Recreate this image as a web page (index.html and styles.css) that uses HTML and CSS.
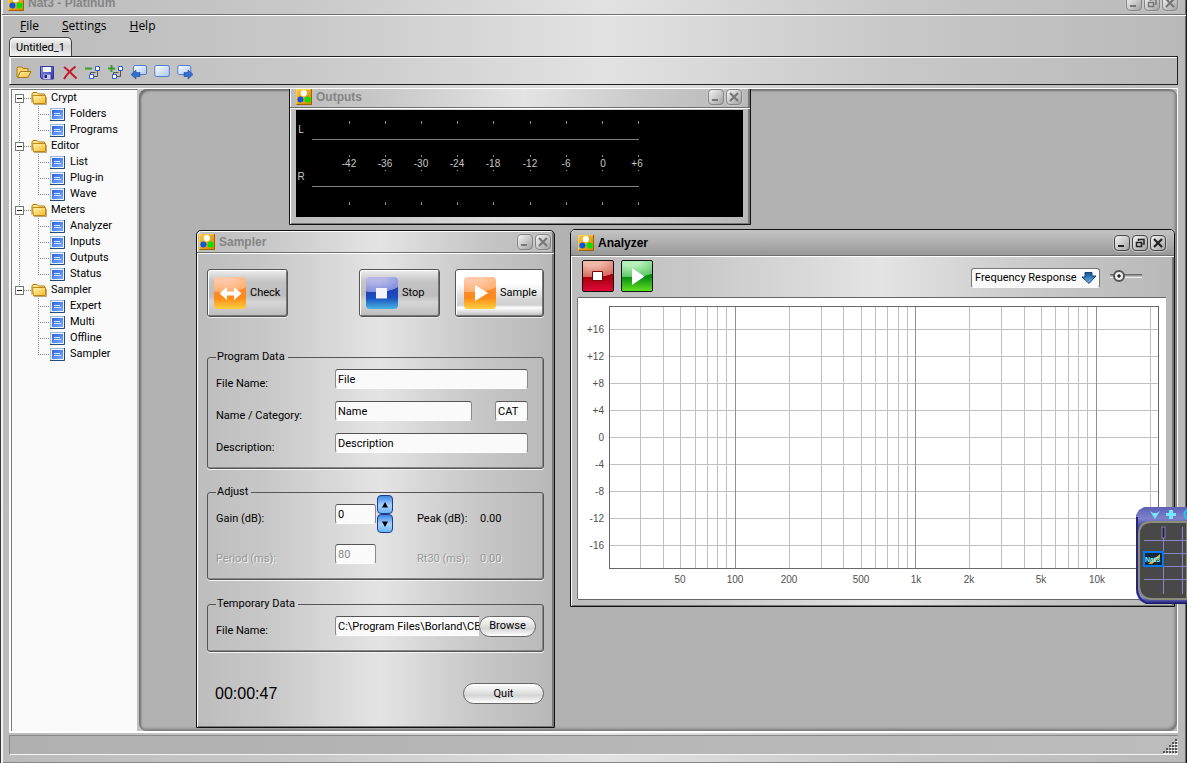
FILE: index.html
```html
<!DOCTYPE html>
<html lang="en">
<head>
<meta charset="utf-8">
<title>Nat3 - Platinum</title>
<link rel="stylesheet" href="styles.css">
</head>
<body>
<svg width="0" height="0" class="defs" aria-hidden="true">
  <defs>
    <linearGradient id="gGold" x1="0" y1="0" x2="1" y2="1"><stop offset="0" stop-color="#ffc93a"/><stop offset="1" stop-color="#c98500"/></linearGradient>
    <linearGradient id="gFolder" x1="0" y1="0" x2="1" y2="1"><stop offset="0" stop-color="#fff7b0"/><stop offset="1" stop-color="#f5b92c"/></linearGradient>
    <linearGradient id="gBlue" x1="0" y1="0" x2="1" y2="1"><stop offset="0" stop-color="#2d62d8"/><stop offset="1" stop-color="#7fb0ff"/></linearGradient>
    <linearGradient id="gPale" x1="0" y1="0" x2="1" y2="1"><stop offset="0" stop-color="#ffffff"/><stop offset="1" stop-color="#a9c6f5"/></linearGradient>
    <linearGradient id="gDisk" x1="0" y1="0" x2="1" y2="1"><stop offset="0" stop-color="#8c93f0"/><stop offset="1" stop-color="#2c2f9c"/></linearGradient>
    <linearGradient id="gArrow" x1="0" y1="0" x2="0" y2="1"><stop offset="0" stop-color="#174a8c"/><stop offset="1" stop-color="#6db8ee"/></linearGradient>
    <linearGradient id="gPager" x1="0" y1="0" x2="0" y2="1"><stop offset="0" stop-color="#5d60b4"/><stop offset=".12" stop-color="#7e82cc"/><stop offset=".2" stop-color="#4a4c9a"/><stop offset=".7" stop-color="#8a8cc4"/><stop offset=".93" stop-color="#8488e8"/><stop offset="1" stop-color="#101060"/></linearGradient>
    <symbol id="logo" viewBox="0 0 16 16"><rect width="16" height="16" fill="url(#gGold)"/><path d="M0 16V0H16" fill="none" stroke="#ffdc78"/><path d="M.5 15.5H15.5V0" fill="none" stroke="#9a6500"/><circle cx="7.8" cy="4.2" r="3.1" fill="#fff"/><circle cx="4.4" cy="10.6" r="3" fill="#0a55e8"/><circle cx="11.6" cy="10.6" r="3" fill="#08e008"/></symbol>
    <symbol id="folder" viewBox="0 0 16 14"><path d="M1 11.5V3L2 1.5H6L7.5 3H13.5V5" fill="#ffe98c" stroke="#b27a10"/><path d="M1.500 4.500H14.500V12.500H2.500Z" fill="url(#gFolder)" stroke="#c08a18"/><path d="M3 13.500H15.500V6" fill="none" stroke="#8b6a20" stroke-opacity=".6"/></symbol>
    <symbol id="form" viewBox="0 0 15 13"><rect x=".5" y=".5" width="14" height="12" fill="#e8f1ff" stroke="#9dbbe0"/><rect x="2" y="2" width="11" height="9" fill="url(#gBlue)"/><path d="M0 12.500H14.500V0" fill="none" stroke="#274a7c"/><path d="M4 5.500H10M4 7.500H11" stroke="#cfe4ff"/></symbol>
    <symbol id="min" viewBox="0 0 14 14"><path d="M3 10H9" stroke="currentColor" stroke-width="2"/></symbol>
    <symbol id="restore" viewBox="0 0 14 14"><path d="M5.500 5V3.500H11V8H9.500" fill="none" stroke="currentColor" stroke-width="1.500"/><path d="M3.500 6.500H8.500V10.500H3.500Z" fill="none" stroke="currentColor" stroke-width="1.500"/></symbol>
    <symbol id="close" viewBox="0 0 14 14"><path d="M3 3L11 11M11 3L3 11" stroke="currentColor" stroke-width="2.200"/></symbol>
    <symbol id="nodes" viewBox="0 0 12 15"><path d="M2.500 9V7.500H7.500" fill="none" stroke="#555"/><path d="M7.500 1.500H11.500V5.500H7.500ZM1.500 9.500H5.500V13.500H1.500Z" fill="#fff" stroke="#2f5fc0"/><path d="M6 11.500H9.500V6" fill="none" stroke="#555"/></symbol>
  </defs>
</svg>
<div class="app">
  <header class="title app-title">
    <svg class="logo"><use href="#logo"/></svg>
    <h1 class="caption">Nat3 - Platinum</h1>
    <button class="wbtn" aria-label="Minimize"><svg><use href="#min"/></svg></button>
    <button class="wbtn" aria-label="Restore"><svg><use href="#restore"/></svg></button>
    <button class="wbtn" aria-label="Close"><svg><use href="#close"/></svg></button>
  </header>
  <nav class="menu">
    <button><u>F</u>ile</button><button><u>S</u>ettings</button><button><u>H</u>elp</button>
  </nav>
  <div class="tabs"><button class="tab">Untitled_1</button></div>
  <div class="toolbar">
    <button aria-label="Open"><svg viewBox="0 0 16 16"><path d="M1 13V4L2 3H6L7 4.500H12V7" fill="#f8d568" stroke="#a87818"/><path d="M1.500 13.500L4.500 7.500H15L12 13.500Z" fill="url(#gFolder)" stroke="#a87818"/></svg></button>
    <button aria-label="Save"><svg viewBox="0 0 16 16"><path d="M1.500 2.500H14.500V15H3L1.500 13.500Z" fill="url(#gDisk)" stroke="#34369c"/><path d="M4 3H12V8H4Z" fill="#f4f6ff"/><path d="M4.500 10.500H11.500V15H4.500Z" fill="#c9cdf0"/><path d="M5.500 11H8V14H5.500Z" fill="#20206c"/></svg></button>
    <button aria-label="Delete"><svg viewBox="0 0 16 16"><path d="M2 3C6 6 10 10 14.500 14.500M13.500 2.500C9 6 5 10 2 15" fill="none" stroke="#c81428" stroke-width="2"/></svg></button>
    <button aria-label="Remove node"><svg viewBox="0 0 16 16"><path d="M0 4.500H7" stroke="#3a9a30" stroke-width="2"/><use href="#nodes" x="3" y="1" width="12" height="15"/></svg></button>
    <button aria-label="Add node"><svg viewBox="0 0 16 16"><path d="M0 4.500H7M3.500 1V8" stroke="#3a9a30" stroke-width="2"/><use href="#nodes" x="3" y="1" width="12" height="15"/></svg></button>
    <button aria-label="Previous"><svg viewBox="0 0 16 16"><rect x="2.500" y="1.500" width="13" height="9" rx="1.500" fill="url(#gPale)" stroke="#4f7ed0"/><path d="M0 10.500L5 6V8.500H9V12.500H5V15Z" fill="#3470d0" stroke="#1e4ca0" stroke-width=".6"/></svg></button>
    <button aria-label="Window"><svg viewBox="0 0 16 16"><rect x=".8" y="1.500" width="14.500" height="11" rx="1.500" fill="url(#gPale)" stroke="#4f7ed0"/></svg></button>
    <button aria-label="Next"><svg viewBox="0 0 16 16"><rect x=".8" y="1.500" width="13" height="9" rx="1.500" fill="url(#gPale)" stroke="#4f7ed0"/><path d="M16 10.500L11 6V8.500H7V12.500H11V15Z" fill="#3470d0" stroke="#1e4ca0" stroke-width=".6"/></svg></button>
  </div>
  <main class="work">
    <aside class="side">
      <ul class="tree">
        <li class="branch"><div class="node"><button class="toggle" aria-label="Collapse Crypt"></button><svg class="folder"><use href="#folder"/></svg>Crypt</div>
          <ul><li><a href="#folders"><svg><use href="#form"/></svg>Folders</a></li><li><a href="#programs"><svg><use href="#form"/></svg>Programs</a></li></ul></li>
        <li class="branch"><div class="node"><button class="toggle" aria-label="Collapse Editor"></button><svg class="folder"><use href="#folder"/></svg>Editor</div>
          <ul><li><a href="#list"><svg><use href="#form"/></svg>List</a></li><li><a href="#plugin"><svg><use href="#form"/></svg>Plug-in</a></li><li><a href="#wave"><svg><use href="#form"/></svg>Wave</a></li></ul></li>
        <li class="branch"><div class="node"><button class="toggle" aria-label="Collapse Meters"></button><svg class="folder"><use href="#folder"/></svg>Meters</div>
          <ul><li><a href="#analyzer"><svg><use href="#form"/></svg>Analyzer</a></li><li><a href="#inputs"><svg><use href="#form"/></svg>Inputs</a></li><li><a href="#outputs"><svg><use href="#form"/></svg>Outputs</a></li><li><a href="#status"><svg><use href="#form"/></svg>Status</a></li></ul></li>
        <li class="branch"><div class="node"><button class="toggle" aria-label="Collapse Sampler"></button><svg class="folder"><use href="#folder"/></svg>Sampler</div>
          <ul><li><a href="#expert"><svg><use href="#form"/></svg>Expert</a></li><li><a href="#multi"><svg><use href="#form"/></svg>Multi</a></li><li><a href="#offline"><svg><use href="#form"/></svg>Offline</a></li><li><a href="#sampler"><svg><use href="#form"/></svg>Sampler</a></li></ul></li>
      </ul>
    </aside>
    <section class="mdi">
      <article class="win outputs" id="outputs">
        <header class="title"><svg class="logo"><use href="#logo"/></svg><h2 class="caption">Outputs</h2>
          <button class="wbtn" aria-label="Minimize"><svg><use href="#min"/></svg></button><button class="wbtn" aria-label="Close"><svg><use href="#close"/></svg></button></header>
        <svg class="meter" viewBox="0 0 447 107" role="img" aria-label="Output level meter">
          <path d="M16 29.500H343M16 76.500H343" stroke="#808080"/>
          <path d="M53.500 11v3m0 31v2m0 13v1m0 31v3M89.500 11v3m0 31v2m0 13v1m0 31v3M125.500 11v3m0 31v2m0 13v1m0 31v3M161.500 11v3m0 31v2m0 13v1m0 31v3M197.500 11v3m0 31v2m0 13v1m0 31v3M234.500 11v3m0 31v2m0 13v1m0 31v3M270.500 11v3m0 31v2m0 13v1m0 31v3M306.500 11v3m0 31v2m0 13v1m0 31v3M342.500 11v3m0 31v2m0 13v1m0 31v3" stroke="#909090" fill="none"/>
          <text x="5" y="23" text-anchor="middle">L</text><text x="5" y="70" text-anchor="middle">R</text>
          <g text-anchor="middle"><text x="53" y="57">-42</text><text x="89" y="57">-36</text><text x="125" y="57">-30</text><text x="161" y="57">-24</text><text x="197" y="57">-18</text><text x="234" y="57">-12</text><text x="270" y="57">-6</text><text x="307" y="57">0</text><text x="341" y="57">+6</text></g>
        </svg>
      </article>

      <article class="win sampler" id="sampler">
        <header class="title"><svg class="logo"><use href="#logo"/></svg><h2 class="caption">Sampler</h2>
          <button class="wbtn" aria-label="Minimize"><svg><use href="#min"/></svg></button><button class="wbtn" aria-label="Close"><svg><use href="#close"/></svg></button></header>
        <form class="body">
          <div class="actions">
            <button type="button" class="big"><span class="tile orange"><svg viewBox="0 0 32 32"><path d="M5.500 16.500L13 10V14.500H20V10L27.500 16.500L20 23V18.500H13V23Z" fill="#fff"/></svg></span>Check</button>
            <button type="button" class="big stop"><span class="tile blue"><svg viewBox="0 0 32 32"><path d="M10 11H21V21.500H10Z" fill="#f4f4ff"/></svg></span>Stop</button>
            <button type="button" class="big bright"><span class="tile orange"><svg viewBox="0 0 32 32"><path d="M11 8V24L24 16Z" fill="#fff"/></svg></span>Sample</button>
          </div>
          <fieldset><legend>Program Data</legend>
            <div class="row"><label for="file">File Name:</label><input id="file" class="wide" value="File"></div>
            <div class="row"><label for="name">Name / Category:</label><input id="name" class="grow" value="Name"><input class="cat" aria-label="Category" value="CAT"></div>
            <div class="row"><label for="desc">Description:</label><input id="desc" class="wide" value="Description"></div>
          </fieldset>
          <fieldset class="adjust"><legend>Adjust</legend>
            <div class="row spinrow"><label for="gain">Gain (dB):</label><input id="gain" class="num" value="0"><span class="spin"><button type="button" aria-label="Increase gain"><svg viewBox="0 0 6 6"><path d="M0 5.500L3 0L6 5.500Z"/></svg></button><button type="button" aria-label="Decrease gain"><svg viewBox="0 0 6 6"><path d="M0 .5L3 6L6 .5Z"/></svg></button></span><span class="read">Peak (dB):</span><output>0.00</output></div>
            <div class="row off"><label for="period">Period (ms):</label><input id="period" class="num" value="80" disabled><span class="spin"></span><span class="read">Rt30 (ms):</span><output>0.00</output></div>
          </fieldset>
          <fieldset class="temp"><legend>Temporary Data</legend>
            <div class="row"><label for="tmp">File Name:</label><input id="tmp" class="path" value="C:\Program Files\Borland\CB"><button type="button" class="pill browse">Browse</button></div>
          </fieldset>
          <div class="foot"><time>00:00:47</time><button type="button" class="pill quit">Quit</button></div>
        </form>
      </article>

      <article class="win analyzer" id="analyzer">
        <header class="title"><svg class="logo"><use href="#logo"/></svg><h2 class="caption">Analyzer</h2>
          <button class="wbtn" aria-label="Minimize"><svg><use href="#min"/></svg></button><button class="wbtn" aria-label="Restore"><svg><use href="#restore"/></svg></button><button class="wbtn" aria-label="Close"><svg><use href="#close"/></svg></button></header>
        <div class="abar">
          <button class="sq red" aria-label="Stop"><svg viewBox="1 1 30 30"><path d="M10.500 11.500H20.500V20.500H10.500Z" fill="#fff" stroke="#7c0008"/></svg></button>
          <button class="sq green" aria-label="Play"><svg viewBox="1 1 30 30"><path d="M11 8V25L23.500 16.500Z" fill="#fff"/></svg></button>
          <div class="combo"><select aria-label="Display mode"><option>Frequency Response</option></select><svg viewBox="0 0 16 12"><path d="M4 .5H11V4H15L8 11.500L1 5H4Z" fill="url(#gArrow)" stroke="#16427c"/></svg></div>
          <input type="range" class="range" aria-label="Zoom" value="12">
        </div>
        <svg class="chart" viewBox="0 0 588 301" role="img" aria-label="Frequency response chart">
          <path d="M31 31.500H581M31 58.500H581M31 85.500H581M31 112.500H581M31 139.500H581M31 166.500H581M31 193.500H581M31 220.500H581M31 247.500H581M62.500 9V271M85.500 9V271M102.500 9V271M117.500 9V271M129.500 9V271M139.500 9V271M148.500 9V271M211.500 9V271M243.500 9V271M265.500 9V271M283.500 9V271M297.500 9V271M309.500 9V271M320.500 9V271M329.500 9V271M391.500 9V271M423.500 9V271M446.500 9V271M463.500 9V271M477.500 9V271M490.500 9V271M500.500 9V271M509.500 9V271M572.500 9V271" stroke="#c0c0c0" fill="none"/>
          <path d="M157.500 9V271M337.500 9V271M518.500 9V271" stroke="#909090"/>
          <rect x="31.500" y="8.500" width="549" height="262" fill="none" stroke="#686868"/>
          <g text-anchor="end"><text x="26" y="35">+16</text><text x="26" y="62">+12</text><text x="26" y="89">+8</text><text x="26" y="116">+4</text><text x="26" y="143">0</text><text x="26" y="170">-4</text><text x="26" y="197">-8</text><text x="26" y="224">-12</text><text x="26" y="251">-16</text></g>
          <g text-anchor="middle"><text x="102" y="285">50</text><text x="157" y="285">100</text><text x="211" y="285">200</text><text x="283" y="285">500</text><text x="338" y="285">1k</text><text x="391" y="285">2k</text><text x="463" y="285">5k</text><text x="519" y="285">10k</text></g>
        </svg>
      </article>
    </section>
  </main>
  <footer class="status"><svg viewBox="0 0 16 16"><path d="M13 1h2M10 4h2m1 0h2M7 7h2m1 0h2m1 0h2M4 10h2m1 0h2m1 0h2m1 0h2M1 13h2m1 0h2m1 0h2m1 0h2m1 0h2" stroke="#555" stroke-width="2"/><path d="M14 2.500h2M11 5.500h2m1 0h2M8 8.500h2m1 0h2m1 0h2M5 11.500h2m1 0h2m1 0h2m1 0h2M2 14.500h2m1 0h2m1 0h2m1 0h2m1 0h2" stroke="#fff"/></svg></footer>
</div>
<svg class="pager" viewBox="0 0 51 97" role="img" aria-label="Desktop pager">
  <path d="M8 0H51V97H10L3 93L0 86V8L3 3Z" fill="url(#gPager)"/>
  <path d="M51 15H14Q3 16 3 27V80Q4 91 15 92H51Z" fill="#484848" stroke="#8c8c78" stroke-width="2"/>
  <path d="M1 10V82Q2 92 9 95" fill="none" stroke="#25257a" stroke-width="2"/>
  <path d="M8 33.500H51M8 46.500H51M8 59.500H51M8 72.500H51M27.500 20V87M46.500 20V87" stroke="#8585c5"/>
  <path d="M14 4L17 6H21L24 4L19 12ZM30 6H33V3H37V6H40V9H37V12H33V9H30Z" fill="#74e8ff"/>
  <path d="M51 3Q46 7 51 12" fill="none" stroke="#20c8f0" stroke-width="2"/>
  <rect x="26" y="20" width="3" height="11" fill="#202040" stroke="#8080b0"/>
  <rect x="8" y="45" width="19" height="14" fill="#102840" stroke="#0878f0" stroke-width="2"/>
  <path d="M12 57L24 47V50L16 57Z" fill="#e8b030"/>
  <text x="9" y="55">Nat3</text>
</svg>
</body>
</html>
```
FILE: styles.css
```css
* { box-sizing: border-box; }
body {
  margin: 0;
  font: 11px/12px Roboto, "Liberation Sans", sans-serif;
  color: #000;
}
button, input, select, output { font: inherit; color: inherit; }
button { padding: 0; border: 0; background: none; }
h1, h2 { margin: 0; }
.defs { position: absolute; }

.app {
  display: flex;
  flex-direction: column;
  min-height: 100vh;
  overflow: hidden;
  padding: 0 8px 8px 9px;
  border: solid #1c1c1c;
  border-width: 0 1px 1px 0;
  box-shadow: inset 1px 0 #333, inset 3px 0 #f2f2f2, inset -1px 0 #666, inset 0 -1px #888;
  background: linear-gradient(90deg, #bbb, #c8c8c8 25%, #e2e2e2 51%, #c8c8c8 75%, #b9b9b9);
}

/* Title bars and window buttons */
.title {
  display: flex;
  align-items: center;
  gap: 2px;
  height: 23px;
  padding: 0 8px 0 2px;
  border-bottom: 1px solid #707070;
  box-shadow: 0 1px #fff;
}
.logo { flex: none; width: 16px; height: 16px; }
.caption {
  flex: 1;
  padding-left: 2px;
  font: bold 12px/16px "Liberation Sans", sans-serif;
  color: #858585;
}
.wbtn {
  width: 16px;
  height: 16px;
  border: 1px solid #858585;
  border-radius: 4px;
  color: #777;
  background: linear-gradient(135deg, #f4f4f4, #a2a2a2);
  box-shadow: 0 0 0 1px #c9c9c9;
}
.wbtn svg { display: block; width: 14px; height: 14px; }
.app-title {
  margin: -8px -8px 0 -7px;
  padding: 0 8px 0 6px;
}

/* Menu, tabs, toolbar */
.menu {
  display: flex;
  gap: 23px;
  height: 22px;
  padding: 0 11px;
  font: 12px/22px "Open Sans", sans-serif;
}
.tabs { display: flex; height: 19px; }
.tab {
  height: 20px;
  margin-bottom: -1px;
  padding: 0 6px;
  border: 1px solid #444;
  border-bottom: 0;
  border-radius: 5px 5px 0 0;
  background: linear-gradient(#f6f6f6, #d4d4d4 45%, #f6f6f6);
  box-shadow: inset 1px 1px #fff;
}
.toolbar {
  display: flex;
  align-items: center;
  gap: 7px;
  height: 29px;
  padding: 2px 6px 0;
  border: 1px solid #222;
  border-left-color: #eee;
  box-shadow: inset 0 1px #fff, inset 1px 0 #fff;
}
.toolbar button, .toolbar svg { display: block; width: 16px; height: 16px; }

/* Workspace */
.work {
  display: flex;
  flex: 1;
  margin-top: 3px;
  min-height: 645px;
  border: 1px solid #fff;
  border-width: 1px 1px 2px 2px;
}
.side {
  flex: none;
  width: 126px;
  background: #fafafa;
  border-top: 1px solid #777;
  border-left: 1px solid #777;
}
.mdi {
  position: relative;
  flex: 1;
  margin-left: 2px;
  overflow: hidden;
  border-radius: 8px;
  background: #b2b2b2;
  box-shadow: inset 2px 2px 2px #707070, inset -2px -2px 3px #777;
}

/* Navigation tree */
.tree, .tree ul { margin: 0; padding: 0; list-style: none; }
.branch {
  background: repeating-linear-gradient(#888 0 1px, transparent 1px 2px) 7px 0 / 1px 100% no-repeat;
}
.branch:first-child { background-position: 7px 8px; }
.branch:last-child { background-size: 1px 8px; }
.node {
  display: flex;
  align-items: center;
  height: 16px;
  padding-left: 3px;
  background: repeating-linear-gradient(90deg, #888 0 1px, transparent 1px 2px) 8px 8px / 12px 1px no-repeat;
}
.toggle {
  width: 9px;
  height: 9px;
  margin-right: 7px;
  border: 1px solid #777;
  background: linear-gradient(#222, #222) 1px 3px / 5px 1px no-repeat #fff;
}
.folder { width: 16px; height: 14px; margin-right: 4px; }
.tree a {
  display: flex;
  align-items: center;
  height: 16px;
  padding-left: 38px;
  color: #000;
  text-decoration: none;
  background:
    repeating-linear-gradient(#888 0 1px, transparent 1px 2px) 26px 0 / 1px 100% no-repeat,
    repeating-linear-gradient(90deg, #888 0 1px, transparent 1px 2px) 26px 8px / 12px 1px no-repeat;
}
.tree ul li:last-child a { background-size: 1px 8px, 12px 1px; }
.tree a svg { width: 15px; height: 13px; margin-right: 5px; }

/* Child windows */
.win {
  position: absolute;
  border: 1px solid #111;
  border-radius: 5px 5px 0 0;
  background: linear-gradient(90deg, #bdbdbd, #c8c8c8 20%, #e4e4e4 51%, #c8c8c8 78%, #b8b8b8);
  box-shadow: inset 1px 1px #fff, inset -2px -1px #777;
}
.outputs { left: 150px; top: -6px; width: 462px; padding-bottom: 7px; }
.outputs .title { height: 24px; padding: 2px 8px 0 6px; }
.meter { display: block; width: 447px; height: 107px; margin: 2px 0 0 6px; background: #000; }
.meter text { font: 10px "Liberation Sans", sans-serif; fill: #c8c8c8; }

.sampler { left: 57px; top: 141px; width: 359px; height: 498px; }
.sampler .title { height: 22px; padding-right: 3px; }
.body { padding: 16px 10px 0; }
.actions { display: flex; gap: 15px; margin-bottom: 34px; }
.big {
  display: flex;
  align-items: center;
  gap: 4px;
  width: 81px;
  height: 48px;
  padding-left: 6px;
  border: 1px solid #555;
  border-radius: 3px;
  background: linear-gradient(#eee, #c4c4c4 25%, #bdbdbd 55%, #d6d6d6 70%, #bcbcbc);
  box-shadow: inset 1px 1px #fff, inset -1px -1px #777, 0 1px #e8e8e8;
}
.stop { margin-left: auto; }
.bright { width: 89px; padding-left: 8px; background: linear-gradient(#fff 30%, #d8d8d8 62%, #d0d0d0 76%, #fff 82%, #bbb); }
.tile { width: 32px; height: 32px; border-radius: 4px; }
.tile svg { display: block; }
.orange { background: radial-gradient(ellipse 95% 48% at 30% 0, #ffc8a8 30%, #ffb070 98%, transparent), linear-gradient(#ff8a28 50%, #ff8a18 65%, #ffd040); }
.blue { background: radial-gradient(ellipse 95% 48% at 30% 0, #b8b8e8 30%, #8090dc 98%, transparent), linear-gradient(#1d44b8 50%, #1850c0 65%, #48b4e0); }

fieldset {
  min-width: 0;
  margin: 0 0 17px;
  padding: 6px 15px 15px 8px;
  border: 1px solid #555;
  border-radius: 3px;
  box-shadow: 0 1px #f4f4f4, inset -1px -1px #888;
}
legend { height: 12px; padding: 0 3px 0 1px; }
.row { display: flex; align-items: center; height: 20px; }
.row + .row { margin-top: 12px; }
.row label, .read, .row output { padding-top: 10px; }
.row label { width: 119px; }
.row input {
  height: 20px;
  min-width: 0;
  padding: 0 2px;
  border: 1px solid #888;
  border-top-color: #555;
  border-bottom-color: #fff;
  border-radius: 3px;
  outline: 0;
  background: #fafafa;
}
.wide { flex: 1; }
.grow { flex: 1; margin-right: 23px; }
.cat { width: 33px; }
.row .num { width: 41px; }
.spin { width: 17px; margin: 0 23px 0 1px; }
.spin button {
  display: flex;
  align-items: center;
  justify-content: center;
  width: 16px;
  height: 19px;
  border: 1px solid #1c3c88;
  border-radius: 4px;
  background: linear-gradient(#3f86e0, #a8d4ff 55%, #6cb4f8);
}
.spin svg { width: 6px; height: 6px; }
.read { width: 63px; }
.adjust { padding-top: 6px; margin-bottom: 18px; }
.adjust .row + .row { margin-top: 20px; }
.off { color: #989898; text-shadow: 1px 1px #f0f0f0; }
.off input { color: #888; text-shadow: none; }
.temp { padding: 6px 7px 15px 8px; margin-bottom: 31px; }
.row .path { flex: 1; border-radius: 3px 0 0 3px; border-right: 0; padding-right: 0; }
.pill {
  height: 21px;
  border: 1px solid #666;
  border-radius: 11px;
  background: linear-gradient(#fff, #e2e2e2 45%, #d4d4d4 60%, #fff);
}
.browse { width: 57px; }
.foot { display: flex; align-items: center; justify-content: space-between; padding-left: 8px; }
.foot time { font: 16px/20px "Liberation Sans", sans-serif; }
.quit { width: 81px; }

.analyzer { left: 431px; top: 140px; width: 605px; height: 378px; }
.analyzer .title { height: 26px; padding: 0 8px 0 7px; border-radius: 4px 4px 0 0; background: linear-gradient(#c4c4c4, #989898); }
.analyzer .caption { color: #000; }
.analyzer .wbtn { color: #222; border-color: #444; }
.abar { display: flex; align-items: center; height: 42px; padding: 0 28px 2px 11px; }
.sq { width: 32px; height: 32px; margin-right: 7px; border: 1px solid #111; border-radius: 2px; }
.sq svg { display: block; }
.red { background: radial-gradient(ellipse 110% 55% at 30% 0, #f0b8a8 30%, #d86860 98%, transparent), linear-gradient(#a80010 55%, #e00838); }
.green { background: radial-gradient(ellipse 110% 55% at 30% 0, #b4f0b8 30%, #5cc868 98%, transparent), linear-gradient(#0c9014 55%, #60e020); }
.combo { position: relative; margin: 4px 10px 0 auto; }
.combo select {
  appearance: none;
  display: block;
  width: 129px;
  height: 20px;
  padding: 0 3px;
  border: 1px solid #777;
  border-bottom-color: #fff;
  border-radius: 3px;
  background: #fafafa;
}
.combo svg { position: absolute; right: 3px; top: 4px; width: 16px; height: 12px; pointer-events: none; }
.range { appearance: none; width: 36px; height: 14px; margin: 0; background: linear-gradient(#555, #bbb 60%, #fff) 0 5px / 32px 4px no-repeat; }
.range::-webkit-slider-thumb {
  appearance: none;
  width: 12px;
  height: 12px;
  border: 2px solid #555;
  border-radius: 50%;
  background: radial-gradient(#222 25%, #eee 32%);
}
.chart { display: block; width: 588px; height: 301px; margin-left: 7px; background: #fff; box-shadow: 0 -1px #666, -1px 0 #777, 0 1px #666; }
.chart text { font: 10px "Liberation Sans", sans-serif; fill: #505050; }

.status {
  display: flex;
  justify-content: flex-end;
  height: 20px;
  margin-top: 2px;
  border: 1px solid #888;
  border-right: 0;
  border-bottom-color: #f4f4f4;
  background: linear-gradient(90deg, #b0b0b0, #bcbcbc);
}
.status svg { width: 16px; height: 16px; margin-top: 3px; }

.pager { position: fixed; right: 0; top: 507px; width: 51px; height: 97px; }
.pager text { font: bold 7px "Liberation Sans", sans-serif; fill: #7ff0ff; }
```
